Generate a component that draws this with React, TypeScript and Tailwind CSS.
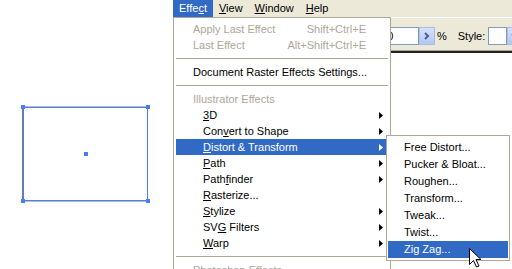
import React from "react"

const font = { fontFamily: '"Liberation Sans", Arial, sans-serif' }

type Item =
  | { kind: "sep" }
  | { kind: "head"; label: string }
  | { kind: "item"; pre: string; key: string; post: string; indent?: boolean; arrow?: boolean; active?: boolean; disabled?: boolean; shortcut?: string }

const items: Item[] = [
  { kind: "item", pre: "Apply Last Effect", key: "", post: "", disabled: true, shortcut: "Shift+Ctrl+E" },
  { kind: "item", pre: "Last Effect", key: "", post: "", disabled: true, shortcut: "Alt+Shift+Ctrl+E" },
  { kind: "sep" },
  { kind: "item", pre: "Document Raster Effects Settings...", key: "", post: "" },
  { kind: "sep" },
  { kind: "head", label: "Illustrator Effects" },
  { kind: "item", pre: "", key: "3", post: "D", indent: true, arrow: true },
  { kind: "item", pre: "Con", key: "v", post: "ert to Shape", indent: true, arrow: true },
  { kind: "item", pre: "", key: "D", post: "istort & Transform", indent: true, arrow: true, active: true },
  { kind: "item", pre: "", key: "P", post: "ath", indent: true, arrow: true },
  { kind: "item", pre: "Path", key: "f", post: "inder", indent: true, arrow: true },
  { kind: "item", pre: "", key: "R", post: "asterize...", indent: true },
  { kind: "item", pre: "", key: "S", post: "tylize", indent: true, arrow: true },
  { kind: "item", pre: "SV", key: "G", post: " Filters", indent: true, arrow: true },
  { kind: "item", pre: "", key: "W", post: "arp", indent: true, arrow: true },
  { kind: "sep" },
  { kind: "head", label: "Photoshop Effects" },
]

const subItems = ["Free Distort...", "Pucker & Bloat...", "Roughen...", "Transform...", "Tweak...", "Twist...", "Zig Zag..."]

function Arrow({ white }: { white?: boolean }) {
  return (
    <svg width="4" height="7" viewBox="0 0 4 7" className="shrink-0">
      <polygon points="0,0 4,3.5 0,7" fill={white ? "#ffffff" : "#000000"} />
    </svg>
  )
}

function BlueButton({ down }: { down?: boolean }) {
  return (
    <div className="w-[16px] h-[18px] border border-[#a9bce6] bg-gradient-to-b from-[#d5e1fb] to-[#b3c8f4] flex items-center justify-center shrink-0">
      <svg width="8" height="8" viewBox="0 0 8 8">
        {down ? (
          <polyline points="1,2 4,5 7,2" fill="none" stroke="#4d6185" strokeWidth="2" />
        ) : (
          <polyline points="2,1 5,4 2,7" fill="none" stroke="#4d6185" strokeWidth="2" />
        )}
      </svg>
    </div>
  )
}

function Canvas() {
  return (
    <div className="relative w-[173px] h-[269px] bg-white shrink-0">
      <svg className="absolute left-0 top-0" width="173" height="269">
        <line x1="22.5" y1="106" x2="22.5" y2="201" stroke="#7a7a7a" strokeWidth="1" />
        <line x1="22" y1="106.5" x2="148" y2="106.5" stroke="#bdbdbd" strokeWidth="1" />
        <line x1="22" y1="201.5" x2="148" y2="201.5" stroke="#bdbdbd" strokeWidth="1" />
        <rect x="23.5" y="107.5" width="124" height="93" fill="none" stroke="#4a7cf2" strokeWidth="1" />
        <rect x="21" y="105" width="4" height="4" fill="#4a7cf2" />
        <rect x="146" y="105" width="4" height="4" fill="#4a7cf2" />
        <rect x="21" y="199" width="4" height="4" fill="#4a7cf2" />
        <rect x="146" y="199" width="4" height="4" fill="#4a7cf2" />
        <rect x="84" y="152" width="4" height="4" fill="#4a7cf2" />
      </svg>
    </div>
  )
}

export default function App() {
  return (
    <div className="w-[512px] h-[269px] overflow-hidden bg-white flex text-[11px] text-black" style={font}>
      <Canvas />
      <div className="relative flex-1 flex flex-col">
        {/* menu bar */}
        <div className="h-[17px] bg-[#ece9d8] flex items-stretch leading-[17px]">
          <div className="px-[6px] bg-[#316ac5] text-white">
            Effe<u className="underline-offset-[1px]">c</u>t
          </div>
          <div className="px-[6px]">
            <u className="underline-offset-[1px]">V</u>iew
          </div>
          <div className="px-[6px]">
            <u className="underline-offset-[1px]">W</u>indow
          </div>
          <div className="px-[6px]">
            <u className="underline-offset-[1px]">H</u>elp
          </div>
        </div>
        {/* toolbar */}
        <div className="border-t border-white bg-[#ece9d8] h-[33px] pt-[9px] flex items-start">
          <div className="ml-[199px] w-[47px] h-[18px] border border-[#7f9db9] bg-white pl-[2px] leading-[16px]">100</div>
          <BlueButton />
          <span className="ml-[2px] leading-[18px]">%</span>
          <span className="ml-[11px] leading-[18px]">Style:</span>
          <div className="ml-[3px] w-[19px] h-[18px] border border-[#7f9db9] bg-white shrink-0" />
          <BlueButton down />
        </div>
        <div className="h-[1px] bg-[#aca899]" />
        <div className="h-[2px] bg-[#222222]" />
        <div className="flex-1 bg-white" />

        {/* Effect dropdown */}
        <div className="absolute left-0 top-[17px] w-[218px] h-[270px] bg-white border border-[#aca899] pt-[3px]">
          {items.map((it, i) => {
            if (it.kind === "sep")
              return (
                <div key={i} className="h-[11px] flex items-center px-[2px]">
                  <div className="h-[1px] w-full bg-[#aca899]" />
                </div>
              )
            if (it.kind === "head")
              return (
                <div key={i} className="h-[16px] leading-[16px] mx-[2px] pl-[17px] text-[#aca899]">
                  {it.label}
                </div>
              )
            return (
              <div
                key={i}
                className={`h-[16px] leading-[16px] mx-[2px] flex items-center pr-[5px] ${it.indent ? "pl-[27px]" : "pl-[17px]"} ${it.active ? "bg-[#316ac5] text-white" : ""} ${it.disabled ? "text-[#aca899]" : ""}`}
              >
                <span className="flex-1 whitespace-nowrap">
                  {it.pre}
                  {it.key && <u className="underline-offset-[1px]">{it.key}</u>}
                  {it.post}
                </span>
                {it.shortcut && <span className="mr-[17px]">{it.shortcut}</span>}
                {it.arrow && <Arrow white={it.active} />}
              </div>
            )
          })}
        </div>

        {/* Distort & Transform submenu */}
        <div className="absolute left-[213px] top-[135px] w-[124px] h-[126px] bg-white border border-[#aca899] pt-[3px]">
          {subItems.map((s, i) => (
            <div
              key={s}
              className={`h-[17px] leading-[17px] mx-[1px] pl-[16px] whitespace-nowrap ${i === subItems.length - 1 ? "bg-[#316ac5] text-white" : ""}`}
            >
              {s}
            </div>
          ))}
        </div>

        {/* mouse pointer */}
        <svg className="absolute left-[296px] top-[248px]" width="13" height="20" viewBox="0 0 13 20">
          <polygon
            points="0.5,0.5 0.5,16.5 4.5,12.5 7.5,19 10,18 7,11.5 12,11.5"
            fill="#ffffff"
            stroke="#000000"
            strokeWidth="1"
            strokeLinejoin="miter"
          />
        </svg>
      </div>
    </div>
  )
}
